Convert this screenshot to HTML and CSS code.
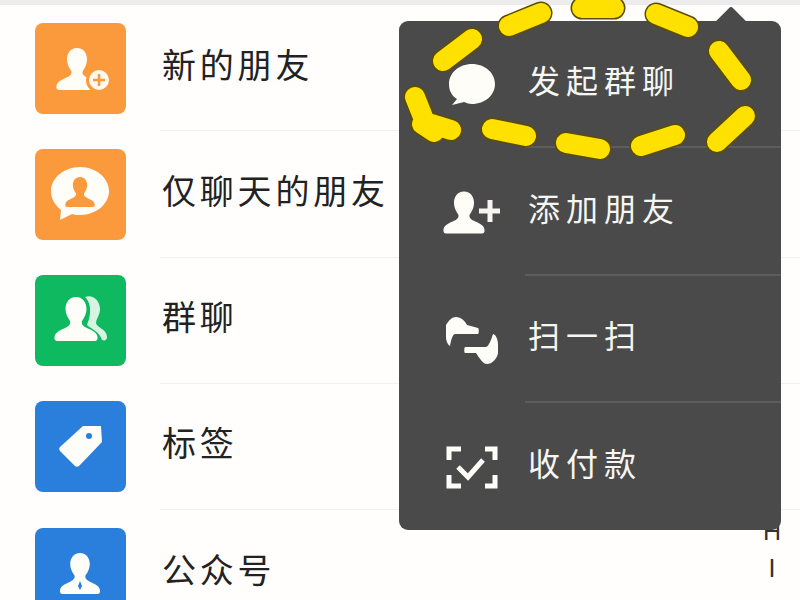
FILE: index.html
```html
<!DOCTYPE html>
<html lang="zh-CN">
<head>
    <meta charset="UTF-8">
    <link rel="stylesheet" href="styles.css">
</head>
<body>
<svg class="defs" width="0" height="0">
    <symbol id="person" viewBox="0 0 44 44">
        <path d="M22 0C15 0 11.5 6 11.5 12C11.5 17 14 21 16 24C17 27 15 29 12 30.5C7 33 1 35 .5 40C0 42.5 1.5 44 3 44H41C42.5 44 44 42.5 43.500 40C43 35 37 33 32 30.500C29 29 27 27 28 24C30 21 32.500 17 32.500 12C32.500 6 29 0 22 0Z"/>
    </symbol>
</svg>

<div class="page">
    <div class="top-band"></div>

    <ul class="contacts">
        <li class="contact">
            <svg class="contact-icon orange" viewBox="0 0 91 91">
                <use href="#person" x="21" y="24" width="42" height="44" class="fill-white"/>
                <circle cx="64" cy="57" r="13" fill="#fb9a3c"/>
                <circle cx="64" cy="57" r="10" fill="#fff8ee"/>
                <path d="M64 51v12M58 57h12" stroke="#fb9a3c" stroke-width="2.500"/>
            </svg>
            <span class="contact-name">新的朋友</span>
        </li>
        <li class="contact">
            <svg class="contact-icon orange" viewBox="0 0 91 91">
                <path class="fill-white" d="M45 18C29 18 16 29 16 42C16 50 20 56 26 61L25 71L37 65C40 66 42 66 45 66C61 66 74 55 74 42C74 29 61 18 45 18Z"/>
                <use href="#person" x="29" y="28" width="32" height="30" fill="#fb9a3c"/>
            </svg>
            <span class="contact-name">仅聊天的朋友</span>
        </li>
        <li class="contact">
            <svg class="contact-icon green" viewBox="0 0 91 91">
                <path d="M50 22C58 19 65 26 65 34C65 40 61 44 61 48C62 53 72 54 72 62C72 65 70 66 67 65C65 57 55 53 52 50C55 43 58 30 50 22Z" fill="#d7f3e1"/>
                <use href="#person" x="19" y="22" width="44" height="44" class="fill-white"/>
            </svg>
            <span class="contact-name">群聊</span>
        </li>
        <li class="contact">
            <svg class="contact-icon blue" viewBox="0 0 91 91">
                <path class="fill-white" d="M48 25H66L67 41L44 65C43 66 41 66 40 65L25 50C24 49 24 47 25 46Z"/>
                <circle cx="54" cy="35" r="3" fill="#2a7fdc"/>
            </svg>
            <span class="contact-name">标签</span>
        </li>
        <li class="contact">
            <svg class="contact-icon blue" viewBox="0 0 91 91">
                <use href="#person" x="23" y="25" width="44" height="41" class="fill-white"/>
                <path d="M45 53l2 5-2 4-2-4z" fill="#2a7fdc"/>
            </svg>
            <span class="contact-name">公众号</span>
        </li>
    </ul>

    <div class="index-bar">
        <span>H</span>
        <span>I</span>
    </div>

    <div class="menu">
        <div class="menu-row">
            <svg class="menu-icon" viewBox="0 0 60 50">
                <path class="fill-white" d="M32 4C19 4 9 13 9 24C9 31 12 36 17 39L12 45L24 42C27 43 29 44 32 44C45 44 55 35 55 24C55 13 45 4 32 4Z"/>
            </svg>
            <span class="menu-label">发起群聊</span>
        </div>
        <div class="menu-row">
            <svg class="menu-icon" viewBox="0 0 60 50">
                <use href="#person" x="3" y="4" width="42" height="43" class="fill-white"/>
                <path d="M50 13v22M39 24h22" stroke="#f7f5ef" stroke-width="5"/>
            </svg>
            <span class="menu-label">添加朋友</span>
        </div>
        <div class="menu-row">
            <svg class="menu-icon" viewBox="0 0 60 50">
                <path class="fill-white" d="M6 10C9 5 12 2 16 2C21 2 25 6 27 10L38 13C39 13 39 19 38 19H15C12 20 11 26 10 31C8 30 6 26 6 22Z"/>
                <path class="fill-white" d="M25 32H46C49 31 51 25 53 19C56 20 58 24 58 30V38C57 44 52 49 47 49C43 49 40 44 36 38H25C24 38 24 33 25 32Z"/>
            </svg>
            <span class="menu-label">扫一扫</span>
        </div>
        <div class="menu-row">
            <svg class="menu-icon" viewBox="0 0 60 50">
                <path class="scan-line" d="M21 7H9V18M45 7H55V18M9 33V44H21M55 33V44H45"/>
                <path class="scan-line" d="M18 25L28 35L43 18"/>
            </svg>
            <span class="menu-label">收付款</span>
        </div>
    </div>

    <!-- 手绘的黄色虚线圈 -->
    <svg class="marker" viewBox="0 0 800 600">
        <defs>
            <path id="dashes" d="M509 26L541 13M582 8H614M656 14L688 27M719 51L741 80M745 116L717 142M675 135L641 146M600 149L566 143M526 136L492 129M415 97L425 122L451 130M422 124L434 132M443 61L472 39"/>
        </defs>
        <use href="#dashes" class="marker-edge"/>
        <use href="#dashes" class="marker-fill"/>
    </svg>
</div>
</body>
</html>
```

FILE: styles.css
```css
body {
    margin: 0;
    background: #fffefc;
    font-family: "Noto Sans CJK SC", "Liberation Sans", sans-serif;
}

.defs {
    display: block;
}

.page {
    position: relative;
    width: 800px;
    height: 600px;
    overflow: hidden;
}

.top-band {
    height: 5px;
    background: #ececec;
}

.fill-white {
    fill: #fffdf8;
}

/* 通讯录列表 */
.contacts {
    list-style: none;
    margin: 0;
    padding: 0 0 0 35px;
}

.contact {
    display: flex;
    align-items: center;
    height: 126.25px;
}

.contact-icon {
    flex: none;
    width: 91px;
    height: 91px;
    border-radius: 8px;
}

.orange { background: #fb9a3c; }
.green { background: #0fb960; }
.blue { background: #2a7fdc; }

.contact-name {
    flex: 1;
    display: flex;
    align-items: center;
    height: 100%;
    box-sizing: border-box;
    margin-left: 34px;
    padding: 0 0 9px 2px;
    border-bottom: 1px solid #f0f0ee;
    font-size: 34px;
    letter-spacing: 3.800px;
    color: #222;
}

.index-bar {
    position: absolute;
    top: 517px;
    right: 19px;
    display: flex;
    flex-direction: column;
    align-items: center;
    gap: 8px;
    font-family: "Liberation Sans", sans-serif;
    font-size: 25px;
    line-height: 29px;
    color: #333;
}

/* 弹出菜单 */
.menu {
    position: absolute;
    top: 21px;
    left: 399px;
    width: 382px;
    height: 509px;
    display: grid;
    grid-template-rows: 127px 128px 127px 1fr;
    background: #4a4a4a;
    border-radius: 9px;
}

.menu::before {
    content: "";
    position: absolute;
    top: -10px;
    left: 320px;
    width: 24px;
    height: 24px;
    background: #4a4a4a;
    border-radius: 3px;
    transform: rotate(45deg);
}

.menu-row {
    position: relative;
    display: flex;
    align-items: center;
    padding-left: 41px;
}

.menu-icon {
    flex: none;
    width: 60px;
    height: 50px;
}

.menu-label {
    flex: 1;
    display: flex;
    align-items: center;
    height: 100%;
    box-sizing: border-box;
    margin-left: 25px;
    padding: 0 0 9px 3px;
    border-bottom: 2px solid #5d5d5d;
    font-size: 32px;
    letter-spacing: 6px;
    color: #f6f6f2;
}

.menu-row:last-child .menu-label {
    border-bottom: none;
}

.scan-line {
    fill: none;
    stroke: #fffdf8;
    stroke-width: 5;
}

.marker {
    position: absolute;
    top: 0;
    left: 0;
    width: 800px;
    height: 600px;
}

.marker-edge,
.marker-fill {
    fill: none;
    stroke-linecap: round;
    stroke-linejoin: round;
}

.marker-edge {
    stroke: #5c4d00;
    stroke-width: 23;
}

.marker-fill {
    stroke: #ffe100;
    stroke-width: 20;
}
```
